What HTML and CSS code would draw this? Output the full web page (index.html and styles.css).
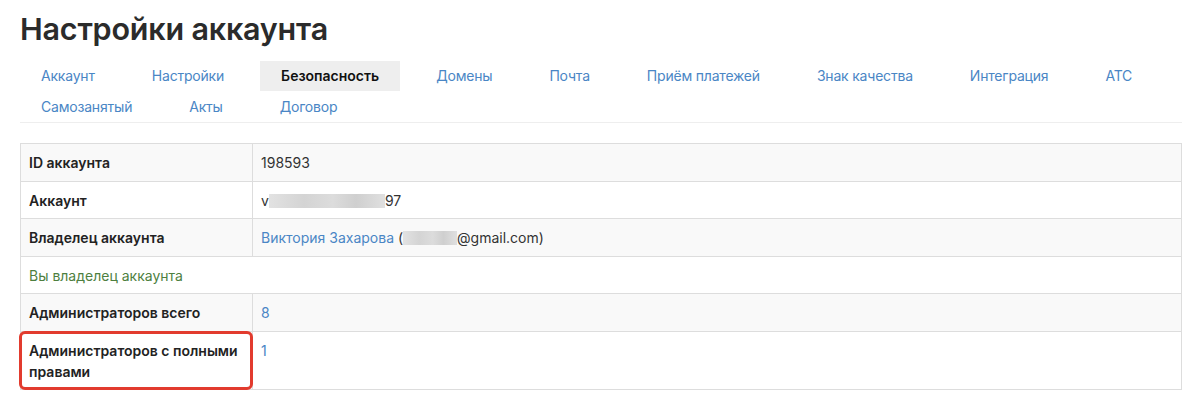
FILE: index.html
```html
<!DOCTYPE html>
<html lang="ru">
<head>
<meta charset="utf-8">
<title>Настройки аккаунта</title>
<link rel="stylesheet" href="styles.css">
</head>
<body>
<div class="page">
  <h1 class="title">Настройки аккаунта</h1>
  <ul class="tabs">
    <li class="tab"><a href="#">Аккаунт</a></li>
    <li class="tab"><a href="#">Настройки</a></li>
    <li class="tab active"><a href="#">Безопасность</a></li>
    <li class="tab"><a href="#">Домены</a></li>
    <li class="tab"><a href="#">Почта</a></li>
    <li class="tab"><a href="#">Приём платежей</a></li>
    <li class="tab"><a href="#">Знак качества</a></li>
    <li class="tab"><a href="#">Интеграция</a></li>
    <li class="tab"><a href="#">АТС</a></li>
    <li class="tab"><a href="#">Самозанятый</a></li>
    <li class="tab"><a href="#">Акты</a></li>
    <li class="tab"><a href="#">Договор</a></li>
  </ul>
  <table class="info">
    <tr class="odd">
      <th class="label">ID аккаунта</th>
      <td class="value">198593</td>
    </tr>
    <tr>
      <th class="label">Аккаунт</th>
      <td class="value">v<span class="blur blur-long"></span>97</td>
    </tr>
    <tr class="odd">
      <th class="label">Владелец аккаунта</th>
      <td class="value"><a class="link" href="#">Виктория Захарова</a> (<span class="blur blur-short"></span>@gmail.com)</td>
    </tr>
    <tr>
      <td class="note" colspan="2">Вы владелец аккаунта</td>
    </tr>
    <tr class="odd">
      <th class="label">Администраторов всего</th>
      <td class="value"><a class="link" href="#">8</a></td>
    </tr>
    <tr>
      <th class="label marked">Администраторов с полными правами</th>
      <td class="value"><a class="link" href="#">1</a></td>
    </tr>
  </table>
</div>
</body>
</html>
```

FILE: styles.css
```css
html, body {
  margin: 0;
  padding: 0;
  background: #ffffff;
}

body {
  font-family: Inter, "Noto Sans", "DejaVu Sans", sans-serif;
  font-size: 14px;
  line-height: 1.5;
  color: #333333;
}

.page {
  padding: 0 18px 0 20px;
}

.title {
  margin: 0;
  padding-top: 11px;
  font-size: 30.5px;
  line-height: 36px;
  font-weight: 600;
  color: #2b2b2b;
  letter-spacing: -0.2px;
}

.tabs {
  list-style: none;
  margin: 14px 0 0;
  padding: 0;
  display: flex;
  flex-wrap: wrap;
  column-gap: 15px;
  row-gap: 1px;
  border-bottom: 1px solid #eeeeee;
}

.tab a {
  display: block;
  padding: 4px 21px 5px;
  color: #4a86c5;
  text-decoration: none;
  letter-spacing: -0.2px;
}

.tab.active a {
  background: #eeeeee;
  color: #111111;
  font-weight: 600;
  letter-spacing: 0;
}

.info {
  margin-top: 20px;
  width: 100%;
  border-collapse: collapse;
  border: 1px solid #dddddd;
}

.info th,
.info td {
  border: 1px solid #dddddd;
  padding: 8px 8px 7.5px 8px;
  text-align: left;
  vertical-align: top;
}

.info tr.odd {
  background: #f9f9f9;
}

.label {
  width: 215px;
  font-weight: 600;
  color: #222222;
}

.link {
  color: #4a86c5;
  text-decoration: none;
}

.note {
  color: #4e7f3f;
}

.blur {
  display: inline-block;
  height: 14px;
  vertical-align: -2px;
  background: linear-gradient(90deg, #e2e2e2, #d4d4d4 30%, #dcdcdc 55%, #cfcfcf 75%, #e0e0e0);
}

.blur-long {
  width: 116px;
}

.blur-short {
  width: 54px;
}

.marked {
  position: relative;
}

.marked::after {
  content: "";
  position: absolute;
  left: -2px;
  top: -1px;
  right: -1px;
  bottom: -1px;
  border: 3px solid #e23b2e;
  border-radius: 6px;
  pointer-events: none;
}
```
